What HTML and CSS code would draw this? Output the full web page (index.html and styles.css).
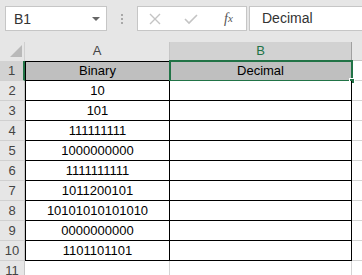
FILE: index.html
```html
<!DOCTYPE html>
<html lang="en">
<head>
	<meta charset="UTF-8">
	<title>Binary to Decimal</title>
	<link rel="stylesheet" href="styles.css">
</head>
<body>
	<div class="bar">
		<div class="namebox">
			<span>B1</span>
			<i class="caret"></i>
		</div>
		<div class="dots"><i></i><i></i><i></i></div>
		<div class="btns">
			<svg width="12" height="12" viewBox="0 0 12 12"><path d="M1 1L11 11M11 1L1 11" stroke="#c4c4c4" stroke-width="1.4" fill="none"/></svg>
			<svg width="14" height="12" viewBox="0 0 14 12"><path d="M1 6L5 10L13 2" stroke="#c4c4c4" stroke-width="1.6" fill="none"/></svg>
			<span class="fx">f<sub>x</sub></span>
		</div>
		<div class="formula">Decimal</div>
	</div>

	<div class="sheet">
		<div class="corner"><i></i></div>
		<div class="colhead">A</div>
		<div class="colhead sel">B</div>
		<div class="colhead rest"></div>

		<div class="rowhead sel">1</div>
		<div class="cell a fill">Binary</div>
		<div class="cell b fill active">Decimal<i class="handle"></i></div>
		<div class="grid"></div>

		<div class="rowhead">2</div><div class="cell a">10</div><div class="cell b"></div><div class="grid"></div>
		<div class="rowhead">3</div><div class="cell a">101</div><div class="cell b"></div><div class="grid"></div>
		<div class="rowhead">4</div><div class="cell a">111111111</div><div class="cell b"></div><div class="grid"></div>
		<div class="rowhead">5</div><div class="cell a">1000000000</div><div class="cell b"></div><div class="grid"></div>
		<div class="rowhead">6</div><div class="cell a">1111111111</div><div class="cell b"></div><div class="grid"></div>
		<div class="rowhead">7</div><div class="cell a">1011200101</div><div class="cell b"></div><div class="grid"></div>
		<div class="rowhead">8</div><div class="cell a">10101010101010</div><div class="cell b"></div><div class="grid"></div>
		<div class="rowhead">9</div><div class="cell a">0000000000</div><div class="cell b"></div><div class="grid"></div>
		<div class="rowhead">10</div><div class="cell a">1101101101</div><div class="cell b"></div><div class="grid"></div>

		<div class="rowhead">11</div><div class="empty"></div><div class="empty"></div><div class="grid"></div>
	</div>
</body>
</html>
```

FILE: styles.css
```css
*{
	margin: 0;
	padding: 0;
	box-sizing: border-box;
}
body{
	width: 362px;
	height: 275px;
	overflow: hidden;
	background: #e6e6e6;
	font-family: "Liberation Sans", Arial, sans-serif;
	font-size: 13px;
	color: #000;
}
.bar{
	display: flex;
	align-items: center;
	height: 42px;
	padding: 0 0 5px 5px;
}
.namebox{
	display: flex;
	align-items: center;
	justify-content: space-between;
	width: 102px;
	height: 25px;
	padding: 0 6px 0 8px;
	background: #fff;
	border: 1px solid #c6c6c6;
	color: #333;
	font-size: 14px;
}
.caret{
	width: 0;
	height: 0;
	border-left: 4px solid transparent;
	border-right: 4px solid transparent;
	border-top: 4px solid #666;
}
.dots{
	display: flex;
	flex-direction: column;
	gap: 2px;
	width: 30px;
	align-items: center;
}
.dots i{
	width: 2px;
	height: 2px;
	background: #a8a8a8;
}
.btns{
	display: flex;
	align-items: center;
	width: 110px;
	height: 25px;
	padding-left: 11px;
	background: #fff;
	border: 1px solid #c6c6c6;
}
.btns svg + svg{
	margin-left: 23px;
}
.fx{
	margin-left: 26px;
	font-family: "Liberation Serif", serif;
	font-style: italic;
	font-size: 14px;
	color: #555;
}
.fx sub{
	font-size: 11px;
	vertical-align: 1px;
}
.formula{
	flex: 1;
	height: 25px;
	margin-left: 2px;
	padding: 3px 0 0 12px;
	background: #fff;
	border: 1px solid #c6c6c6;
	border-right: none;
	color: #333;
	font-size: 14px;
}
.sheet{
	display: grid;
	grid-template-columns: 25px 145px 182px 1fr;
	grid-template-rows: 19px repeat(11, 20px);
}
.corner{
	display: flex;
	align-items: flex-end;
	justify-content: flex-end;
	padding: 0 2px 4px 0;
	border-right: 1px solid #d0d0d0;
}
.corner i{
	width: 0;
	height: 0;
	border-left: 12px solid transparent;
	border-bottom: 12px solid #b9b9b9;
}
.colhead{
	text-align: center;
	line-height: 18px;
	color: #444;
	border-right: 1px solid #c6c6c6;
}
.colhead.sel{
	background: #d2d2d2;
	color: #217346;
	border-right: 1px solid #a0a0a0;
	border-bottom: 1px solid #a0a0a0;
}
.colhead.rest{
	border: none;
	border-bottom: 1px solid #c6c6c6;
}
.rowhead{
	text-align: center;
	line-height: 20px;
	color: #444;
	background: #e6e6e6;
	border-bottom: 1px solid #d0d0d0;
	border-right: 1px solid #c6c6c6;
}
.rowhead.sel{
	background: #d2d2d2;
	border-right: 2px solid #217346;
}
.cell{
	position: relative;
	text-align: center;
	line-height: 19px;
	background: #fff;
	border-right: 1px solid #000;
	border-bottom: 1px solid #000;
}
.cell.a{
	border-left: 1px solid #000;
}
.cell.fill{
	background: #bfbfbf;
	border-top: 1px solid #000;
	line-height: 18px;
}
.active{
	outline: 2px solid #217346;
	outline-offset: -1px;
	border-color: #fff;
}
.handle{
	position: absolute;
	right: -4px;
	bottom: -4px;
	width: 6px;
	height: 6px;
	background: #217346;
	border: 1px solid #fff;
}
.grid{
	background: #fff;
	border-bottom: 1px solid #d4d4d4;
}
.empty{
	background: #fff;
	border-right: 1px solid #d4d4d4;
}
```
